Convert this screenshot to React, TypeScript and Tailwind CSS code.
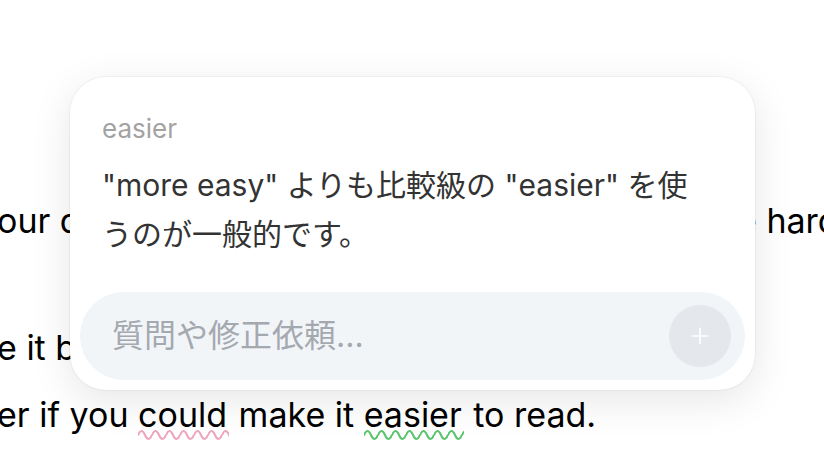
import { Plus } from 'lucide-react';

function Squiggle({ id, color }: { id: string; color: string }) {
    return (
        <svg className="absolute left-0 top-[calc(100%-7px)] w-full h-[14px] pointer-events-none" height="14">
            <defs>
                <pattern id={id} width="14" height="14" patternUnits="userSpaceOnUse">
                    <path d="M0 7 Q3.5 -1 7 7 T14 7" fill="none" stroke={color} strokeWidth="2" strokeLinecap="round" />
                </pattern>
            </defs>
            <rect width="100%" height="14" fill={`url(#${id})`} />
        </svg>
    );
}

export default function App() {
    return (
        <div className="relative w-[824px] h-[462px] overflow-hidden bg-white font-['Inter','Noto_Sans_CJK_JP',sans-serif] text-black">
            {/* Document text behind the popover */}
            <div className="pt-[201px] text-[34px] leading-[40px] whitespace-nowrap">
                <div className="flex -ml-[3px]">
                    <span className="w-[740px] shrink-0 overflow-hidden">our document has good ideas, but some parts ar</span>
                    <span>e hard to follow.</span>
                </div>
                <div className="mt-[87px] -ml-[3px]">e it by splitting the longer sentences.</div>
                <div className="mt-[27px] -ml-[3px]">
                    er if you{' '}
                    <span className="relative pr-[2px]">
                        could
                        <Squiggle id="wave-pink" color="#eea5bd" />
                    </span>{' '}
                    make it{' '}
                    <span className="relative pr-[2px]">
                        easier
                        <Squiggle id="wave-green" color="#58c46c" />
                    </span>{' '}
                    to read.
                </div>
            </div>

            {/* Suggestion popover */}
            <div className="absolute left-[70px] top-[77px] w-[685px] h-[313px] flex flex-col rounded-[36px] bg-white shadow-[0_10px_40px_rgba(0,0,0,0.10)] ring-1 ring-black/[0.04]">
                <div className="pl-8 pr-12 pt-9">
                    <div className="text-[26px] leading-8 text-[#a3a3a3]">easier</div>
                    <p className="mt-4 text-[30px] leading-[49px] text-[#333333]">
                        "more easy" よりも比較級の "easier" を使うのが一般的です。
                    </p>
                </div>
                <div className="mt-auto mx-[10px] mb-[10px] h-[88px] flex items-center justify-between rounded-[44px] bg-[#f2f5f8] pl-8 pr-[14px]">
                    <span className="text-[32px] text-[#a4a9b0]">質問や修正依頼...</span>
                    <button className="w-[62px] h-[62px] rounded-full bg-[#e4e8ed] flex items-center justify-center">
                        <Plus size={26} strokeWidth={1.5} className="text-white" />
                    </button>
                </div>
            </div>
        </div>
    );
}
